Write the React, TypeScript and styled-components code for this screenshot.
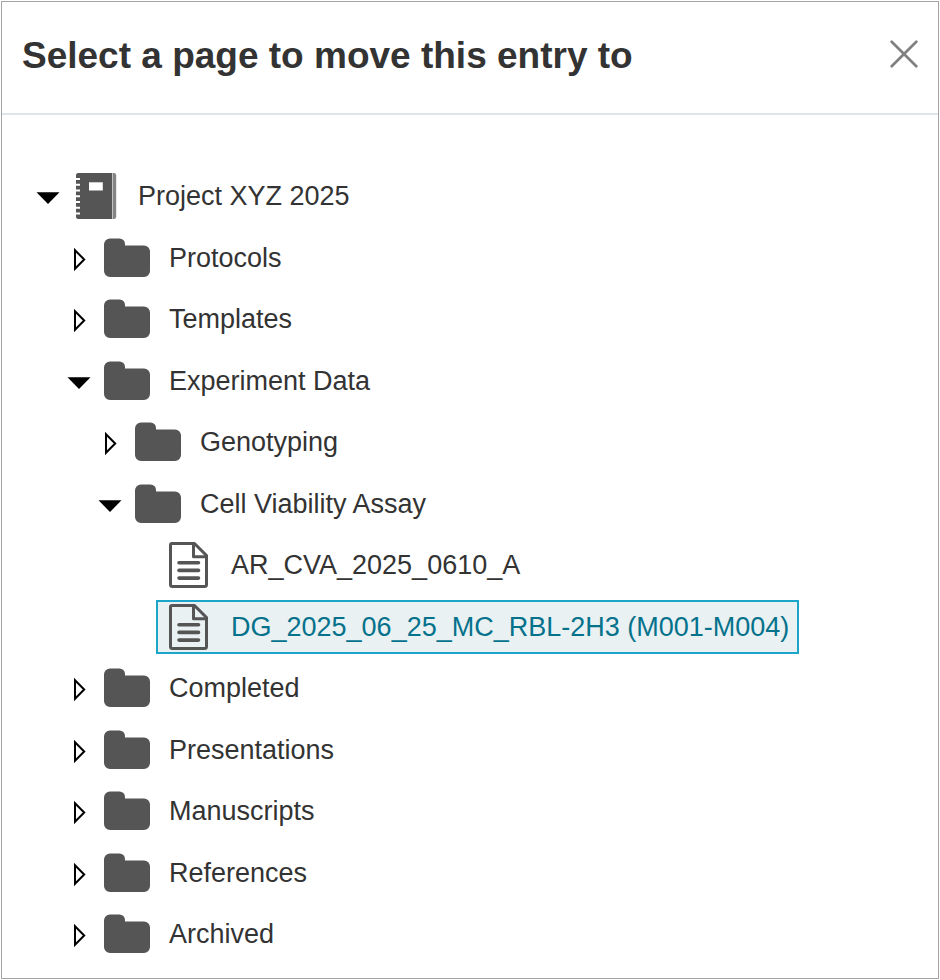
import React, { useState } from "react";
import styled, { createGlobalStyle } from "styled-components";

const GlobalStyle = createGlobalStyle`
  *, *::before, *::after { box-sizing: border-box; }
  body {
    margin: 0;
    background: #fff;
    color: #333;
    font-family: "Liberation Sans", Arial, sans-serif;
  }
`;

const Dialog = styled.section`
  display: flex;
  flex-direction: column;
  min-height: calc(100vh - 2px);
  margin: 1px;
  border: 1px solid #a2a4a6;
`;

const Header = styled.header`
  display: flex;
  align-items: flex-start;
  justify-content: space-between;
  padding: 30px 20px 33px;
  border-bottom: 2px solid #dfe5ea;
`;

const Title = styled.h1`
  margin: 0;
  font-size: 37px;
  line-height: 48px;
  font-weight: 700;
`;

const CloseButton = styled.button`
  display: flex;
  padding: 8px 0;
  border: 0;
  background: none;
  color: #808080;
  cursor: pointer;
`;

const Tree = styled.ul`
  flex: 1;
  display: flex;
  flex-direction: column;
  justify-content: space-between;
  gap: 4px;
  margin: 0;
  padding: 54px 16px 17px 34px;
  list-style: none;
`;

const Row = styled.li<{ $level: number }>`
  display: flex;
  align-items: center;
  gap: 3px;
  padding-left: ${({ $level }) => $level * 31}px;
`;

const Toggle = styled.button`
  display: flex;
  flex: none;
  width: 24px;
  padding: 0;
  border: 0;
  background: none;
  color: #000;
  cursor: pointer;
`;

const ToggleSpace = styled.span`
  flex: none;
  width: 24px;
`;

const Entry = styled.button<{ $selected: boolean }>`
  display: flex;
  align-items: center;
  gap: 19px;
  height: 54px;
  padding: 0 8px;
  border: 2px solid ${({ $selected }) => ($selected ? "#1ba5c8" : "transparent")};
  background: ${({ $selected }) => ($selected ? "#eaf1f3" : "transparent")};
  color: ${({ $selected }) => ($selected ? "#05728c" : "#333")};
  font-family: inherit;
  font-size: 27px;
  line-height: 32px;
  white-space: nowrap;
  text-align: left;
  cursor: pointer;

  svg {
    flex: none;
  }
`;

function CloseIcon() {
  return (
    <svg width="28" height="28" viewBox="0 0 28 28" aria-hidden="true">
      <path d="M1.7 1.7 26.3 26.3M26.3 1.7 1.7 26.3" fill="none" stroke="currentColor" strokeWidth="2.7" strokeLinecap="round" />
    </svg>
  );
}

function ArrowIcon({ open }: { open: boolean }) {
  return (
    <svg width="24" height="28" viewBox="0 0 24 28" aria-hidden="true">
      {open ? (
        <path d="M.5 10.3h23L12 22z" fill="currentColor" />
      ) : (
        <path d="M8 6.2v18.6L17.2 15.5z" fill="none" stroke="currentColor" strokeWidth="2" />
      )}
    </svg>
  );
}

function NotebookIcon() {
  return (
    <svg width="46" height="46" viewBox="0 0 46 46" aria-hidden="true">
      <path d="M39.500 0h1.500a2.200 2.200 0 0 1 2.200 2.200v41.600A2.200 2.200 0 0 1 41 46h-1.500z" fill="#858585" />
      <path
        d="M5.300 0H39V46H5.300A2.300 2.300 0 0 1 3 43.700V41.500H7V39.500H3V35.700H7V33.700H3V30H7V28H3V24.200H7V22.200H3V18.500H7V16.500H3V12.700H7V10.700H3V7H7V5H3V2.300A2.300 2.300 0 0 1 5.300 0Z"
        fill="#555"
      />
      <path d="M16 9.300H29.800v8.200H16z" fill="#fff" />
    </svg>
  );
}

function FolderIcon() {
  return (
    <svg width="46" height="40" viewBox="0 0 46 40" aria-hidden="true">
      <path
        d="M6 .5H15.500A5.500 5.500 0 0 1 21 6V7.500H40A6 6 0 0 1 46 13.500V33A6 6 0 0 1 40 39H6A6 6 0 0 1 0 33V6.500A6 6 0 0 1 6 .5Z"
        fill="#555"
      />
    </svg>
  );
}

function PageIcon() {
  return (
    <svg width="46" height="46" viewBox="0 0 46 46" aria-hidden="true" fill="none" stroke="#555">
      <path
        d="M6 1.500H28.500L40.500 13.500V42.500Q40.500 44.500 38.500 44.500H6.500Q4.500 44.500 4.500 42.500V3Q4.500 1.500 6 1.500Z"
        strokeWidth="3"
        strokeLinejoin="round"
      />
      <path d="M27.500 2V14.700H40" strokeWidth="3" strokeLinejoin="round" />
      <path d="M13 20.700H32.500M13 28.400H32.500M13 36.100H32.500" strokeWidth="3.600" strokeLinecap="round" />
    </svg>
  );
}

const icons = { notebook: NotebookIcon, folder: FolderIcon, page: PageIcon };

interface Item {
  name: string;
  kind: keyof typeof icons;
  level: number;
}

const items: Item[] = [
  { name: "Project XYZ 2025", kind: "notebook", level: 0 },
  { name: "Protocols", kind: "folder", level: 1 },
  { name: "Templates", kind: "folder", level: 1 },
  { name: "Experiment Data", kind: "folder", level: 1 },
  { name: "Genotyping", kind: "folder", level: 2 },
  { name: "Cell Viability Assay", kind: "folder", level: 2 },
  { name: "AR_CVA_2025_0610_A", kind: "page", level: 3 },
  { name: "DG_2025_06_25_MC_RBL-2H3 (M001-M004)", kind: "page", level: 3 },
  { name: "Completed", kind: "folder", level: 1 },
  { name: "Presentations", kind: "folder", level: 1 },
  { name: "Manuscripts", kind: "folder", level: 1 },
  { name: "References", kind: "folder", level: 1 },
  { name: "Archived", kind: "folder", level: 1 },
];

export default function App() {
  const [selected, setSelected] = useState("DG_2025_06_25_MC_RBL-2H3 (M001-M004)");

  return (
    <>
      <GlobalStyle />
      <Dialog role="dialog" aria-labelledby="move-title">
        <Header>
          <Title id="move-title">Select a page to move this entry to</Title>
          <CloseButton type="button" aria-label="Close">
            <CloseIcon />
          </CloseButton>
        </Header>
        <Tree>
          {items.map((item, index) => {
            const Icon = icons[item.kind];
            const open = (items[index + 1]?.level ?? 0) > item.level;
            return (
              <Row key={item.name} $level={item.level}>
                {item.kind === "page" ? (
                  <ToggleSpace />
                ) : (
                  <Toggle type="button" aria-expanded={open} aria-label={`Toggle ${item.name}`}>
                    <ArrowIcon open={open} />
                  </Toggle>
                )}
                <Entry
                  type="button"
                  $selected={item.name === selected}
                  aria-pressed={item.name === selected}
                  onClick={() => setSelected(item.name)}
                >
                  <Icon />
                  <span>{item.name}</span>
                </Entry>
              </Row>
            );
          })}
        </Tree>
      </Dialog>
    </>
  );
}
